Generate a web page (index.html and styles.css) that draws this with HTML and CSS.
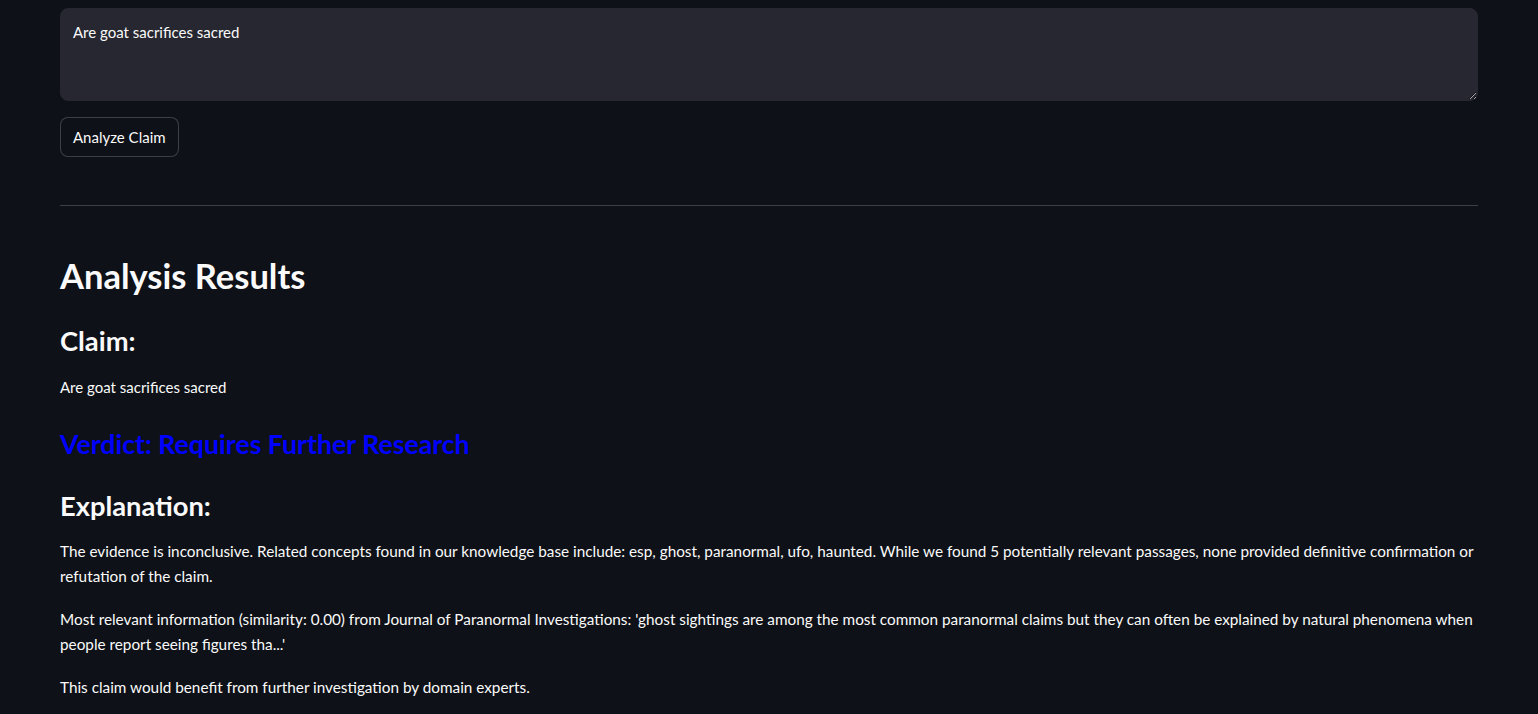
FILE: index.html
```html
<!DOCTYPE html>
<html lang="en">
<head>
<meta charset="utf-8">
<title>Claim Analyzer</title>
<link rel="stylesheet" href="styles.css">
</head>
<body>
<main class="block">
  <textarea class="claim-input" aria-label="Claim">Are goat sacrifices sacred</textarea>
  <button class="btn" type="button">Analyze Claim</button>
  <hr class="divider">
  <h2 class="title">Analysis Results</h2>
  <h3 class="subhead">Claim:</h3>
  <p class="claim-text">Are goat sacrifices sacred</p>
  <h3 class="subhead verdict">Verdict: Requires Further Research</h3>
  <h3 class="subhead explain">Explanation:</h3>
  <p class="para">The evidence is inconclusive. Related concepts found in our knowledge base include: esp, ghost, paranormal, ufo, haunted. While we found 5 potentially relevant passages, none provided definitive confirmation or refutation of the claim.</p>
  <p class="para">Most relevant information (similarity: 0.00) from Journal of Paranormal Investigations: 'ghost sightings are among the most common paranormal claims but they can often be explained by natural phenomena when people report seeing figures tha...'</p>
  <p class="para">This claim would benefit from further investigation by domain experts.</p>
</main>
</body>
</html>
```

FILE: styles.css
```css
html, body {
  margin: 0;
  padding: 0;
  background: #0e1117;
  color: #fafafa;
  font-family: "Lato", "Noto Sans", sans-serif;
  overflow: hidden;
}

.block {
  display: flex;
  flex-direction: column;
  align-items: flex-start;
  padding: 8px 60px 0;
}

.claim-input {
  box-sizing: border-box;
  width: 100%;
  height: 93px;
  margin: 0;
  padding: 11px 12px;
  background: #262730;
  color: #fafafa;
  border: 1px solid #262730;
  border-radius: 8px;
  font-family: inherit;
  font-size: 15px;
  line-height: 25.6px;
  outline: none;
}

.btn {
  box-sizing: border-box;
  margin-top: 16px;
  height: 40px;
  padding: 0 12px 1px;
  background: #0e1117;
  color: #fafafa;
  border: 1px solid rgba(250, 250, 250, 0.2);
  border-radius: 8px;
  font-family: inherit;
  font-size: 15px;
}

.divider {
  align-self: stretch;
  margin: 48px 0 0;
  border: none;
  height: 1px;
  background: rgba(250, 250, 250, 0.2);
}

.title {
  margin: 48px 0 0;
  font-size: 34.5px;
  font-weight: 700;
  line-height: 43px;
}

.subhead {
  margin: 27px 0 0;
  font-size: 27.3px;
  font-weight: 700;
  line-height: 34px;
}

.claim-text {
  margin: 17px 0 0;
  font-size: 15px;
  line-height: 25.6px;
}

.verdict {
  color: #0000ff;
  margin-top: 26px;
  font-size: 26.7px;
}

.explain {
  margin-top: 28px;
}

.para {
  margin: 16px 0 0;
  font-size: 15.3px;
  line-height: 25.6px;
}

.para + .para {
  margin-top: 17px;
}
```
